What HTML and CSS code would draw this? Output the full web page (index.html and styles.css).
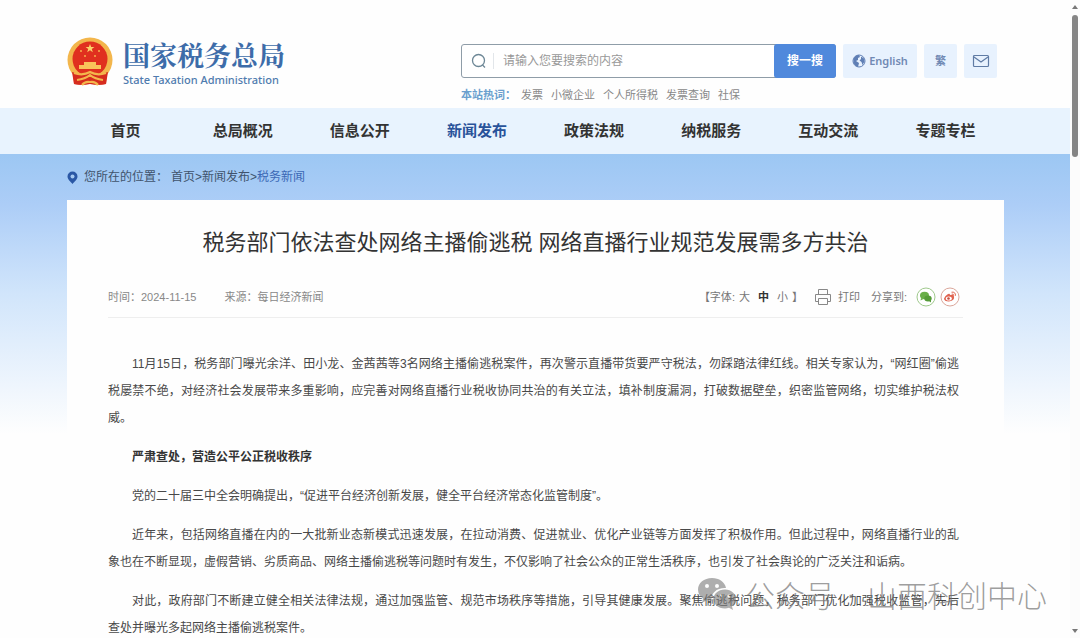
FILE: index.html
```html
<!DOCTYPE html>
<html lang="zh-CN">
<head>
<meta charset="utf-8">
<meta name="viewport" content="width=device-width, initial-scale=1">
<title>国家税务总局</title>
<link rel="stylesheet" href="styles.css">
</head>
<body>
<div class="page">
  <header class="header">
    <div class="container header-row">
      <a class="brand" href="#">
        <svg class="emblem" viewBox="0 0 46 50" aria-hidden="true">
          <path d="M6 30h34l-1 17q-8 2-16 0-8 2-16 0z" fill="#d62c1e"/>
          <circle cx="23" cy="23" r="22.5" fill="#f3b64c"/>
          <circle cx="23" cy="22" r="17.5" fill="#e0301f"/>
          <path d="M23 7l1.200 3h3.200l-2.600 2 1 3.200-2.800-1.900-2.800 1.900 1-3.200-2.600-2h3.200z" fill="#fbd26a"/>
          <g fill="#f7b04c"><circle cx="14" cy="14" r="1"/><circle cx="32" cy="14" r="1"/><circle cx="18" cy="19" r="1"/><circle cx="28" cy="19" r="1"/></g>
          <path d="M17 28v-3h12v3h5v4H12v-4z" fill="#f9c55a"/>
          <path d="M5 35q10 4 18-1 8 5 18 1l-2 12q-8 1-16-1-8 2-16 1z" fill="#d62c1e"/>
          <path d="M7 36q9 3 16-1 7 4 16 1M10 43q8-1 13-5 5 4 13 5M15 48q3-4 8-3 5-1 8 3" fill="none" stroke="#f3b64c" stroke-width="2.200"/>
        </svg>
        <span class="brand-text">
          <span class="brand-cn">国家税务总局</span>
          <span class="brand-en">State Taxation Administration</span>
        </span>
      </a>
      <div class="tools">
        <div class="tools-row">
          <form class="search" role="search">
            <svg class="search-icon" viewBox="0 0 16 16" aria-hidden="true"><circle cx="7.500" cy="7.500" r="6"/><path d="M11.500 12l2.500 2.500"/></svg>
            <input class="search-input" type="text" aria-label="搜索" placeholder="请输入您要搜索的内容">
            <button class="search-button" type="button">搜一搜</button>
          </form>
          <a class="tool tool-wide" href="#">
            <svg class="globe" viewBox="0 0 14 14" aria-hidden="true"><circle cx="7" cy="7" r="6" fill="none" stroke="#5f7fb5"/><path d="M1.500 5Q3 1 7 1l1 2-2 1 0 2-2 1 3 2-1 4Q3 12 1.500 9zM9 2.500l3 2 .5 3-2 3.500-1-3-2-1.500L9 5z" fill="#5f7fb5"/></svg>
            English
          </a>
          <a class="tool" href="#">繁</a>
          <a class="tool" href="#" aria-label="邮箱">
            <svg class="mail" viewBox="0 0 18 14" aria-hidden="true"><rect x="1.500" y="1.500" width="15" height="11" rx="1"/><path d="M2 3l7 5 7-5"/></svg>
          </a>
        </div>
        <div class="hot">
          <strong class="hot-label">本站热词：</strong>
          <a href="#">发票</a><a href="#">小微企业</a><a href="#">个人所得税</a><a href="#">发票查询</a><a href="#">社保</a>
        </div>
      </div>
    </div>
  </header>
  <nav class="nav">
    <div class="container nav-row">
      <a href="#">首页</a><a href="#">总局概况</a><a href="#">信息公开</a><a class="active" href="#">新闻发布</a><a href="#">政策法规</a><a href="#">纳税服务</a><a href="#">互动交流</a><a href="#">专题专栏</a>
    </div>
  </nav>
  <main class="main">
    <div class="container">
      <div class="crumbs">
        <svg class="pin" viewBox="0 0 11 13" aria-hidden="true"><path d="M5.500 0.500a5 5 0 0 1 5 5c0 3-3 5-5 7.500-2-2.500-5-4.500-5-7.500a5 5 0 0 1 5-5z" fill="#2a57a5"/><circle cx="5.500" cy="5.500" r="2" fill="#a5c9f1"/></svg>
        <span class="crumb-label">您所在的位置：</span>
        <span><a href="#">首页</a>&gt;<a href="#">新闻发布</a>&gt;<a class="current" href="#">税务新闻</a></span>
      </div>
      <article class="article">
        <h1 class="title">税务部门依法查处网络主播偷逃税 网络直播行业规范发展需多方共治</h1>
        <div class="meta">
          <span class="date">时间：2024-11-15</span>
          <span>来源：每日经济新闻</span>
          <div class="actions">
            <span class="sizes">【字体<span>:</span><button type="button">大</button><button class="selected" type="button">中</button><button type="button">小</button>】</span>
            <button class="print" type="button">
              <svg class="printer" viewBox="0 0 18 16" aria-hidden="true"><path d="M4.500 5.500v-5h9v5M4.500 12.500h-3v-7h15v7h-3M4.500 9.500h9v6h-9z"/></svg>
              打印
            </button>
            <span class="share-label">分享到:</span>
            <a class="share" href="#" aria-label="微信"><svg viewBox="0 0 20 20" aria-hidden="true"><circle cx="10" cy="10" r="9" fill="#fff" stroke="#9fc98c"/><ellipse cx="8.500" cy="8.500" rx="4.500" ry="3.700" fill="#69ae48"/><path d="M5 11l-.5 2.500 3-1.500z" fill="#69ae48"/><ellipse cx="12" cy="11.500" rx="3.700" ry="3" fill="#559b38"/><path d="M13 14l2 1.500v-3z" fill="#559b38"/></svg></a>
            <a class="share" href="#" aria-label="微博"><svg viewBox="0 0 20 20" aria-hidden="true"><circle cx="10" cy="10" r="9" fill="#fff" stroke="#dba79b"/><path d="M8 7q2-1 2 1 4-1 4 1.500 1 4-5 5-5 0-5-3 1-3 4-4.500z" fill="#e16450"/><ellipse cx="8.800" cy="11.500" rx="3" ry="2" fill="#fff"/><circle cx="8.500" cy="11.500" r="1.300" fill="#c94b3b"/><path d="M11.500 5.200q4-.7 4 3.500M11.800 7q2-.2 2 1.700" fill="none" stroke="#e16450"/></svg></a>
          </div>
        </div>
        <div class="content">
          <p>11月15日，税务部门曝光余洋、田小龙、金茜茜等3名网络主播偷逃税案件，再次警示直播带货要严守税法，勿踩踏法律红线。相关专家认为，“网红圈”偷逃税屡禁不绝，对经济社会发展带来多重影响，应完善对网络直播行业税收协同共治的有关立法，填补制度漏洞，打破数据壁垒，织密监管网络，切实维护税法权威。</p>
          <p><strong>严肃查处，营造公平公正税收秩序</strong></p>
          <p>党的二十届三中全会明确提出，“促进平台经济创新发展，健全平台经济常态化监管制度”。</p>
          <p>近年来，包括网络直播在内的一大批新业态新模式迅速发展，在拉动消费、促进就业、优化产业链等方面发挥了积极作用。但此过程中，网络直播行业的乱象也在不断显现，虚假营销、劣质商品、网络主播偷逃税等问题时有发生，不仅影响了社会公众的正常生活秩序，也引发了社会舆论的广泛关注和诟病。</p>
          <p>对此，政府部门不断建立健全相关法律法规，通过加强监管、规范市场秩序等措施，引导其健康发展。聚焦偷逃税问题，税务部门优化加强税收监管，先后查处并曝光多起网络主播偷逃税案件。</p>
        </div>
      </article>
    </div>
  </main>
</div>
<div class="scrollbar" aria-hidden="true"><span class="arrow-up"></span><span class="thumb"></span><span class="arrow-down"></span></div>
<div class="watermark">
  <svg class="wechat" viewBox="0 0 40 34" aria-hidden="true"><path fill-rule="evenodd" d="M15 1C7 1 1 6 1 12.500c0 4 2 7 5 9L5 26l5-3q2 .7 4.500 1C13.500 16 20 10.500 29 11 28 5 22 1 15 1zM10 7a2 2 0 1 1 0 4 2 2 0 0 1 0-4zM20 7a2 2 0 1 1 0 4 2 2 0 0 1 0-4z"/><path fill-rule="evenodd" d="M28 12.500c-7 0-11.500 4.500-11.500 9.500S21 31.500 28 31.500q2 0 4-.7l4 2.200-1-3.500c2.500-2 4-4.500 4-7.500 0-5-4.500-9.500-11-9.500zM24 17.500a1.500 1.500 0 1 1 0 3 1.500 1.500 0 0 1 0-3zM32 17.500a1.500 1.500 0 1 1 0 3 1.500 1.500 0 0 1 0-3z"/></svg>
  <span>公众号</span><span class="dot">·</span><span>山西科创中心</span>
</div>
</body>
</html>
```
FILE: styles.css
```css
* { box-sizing: border-box; }

body {
  margin: 0;
  height: 100vh;
  display: grid;
  grid-template-columns: minmax(0, 1fr) 10px;
  overflow: hidden;
  position: relative;
  background: #fefefe;
  color: #484848;
  font: 12px/16px "Liberation Sans", "Noto Sans CJK SC", sans-serif;
}

a { color: inherit; text-decoration: none; }
button { padding: 0; border: 0; background: none; color: inherit; font: inherit; }
svg { display: block; flex: none; }

.page { min-width: 0; overflow: hidden; }
.container { margin: 0 66px 0 67px; }

.header { padding-top: 36px; }
.header-row { display: flex; justify-content: space-between; align-items: flex-start; }

.brand { display: flex; align-items: center; gap: 10px; }
.emblem { width: 46px; height: 50px; }
.brand-text { display: flex; flex-direction: column; padding-top: 2px; }
.brand-cn {
  font-family: "Noto Serif CJK SC", "Noto Sans CJK SC", serif;
  font-size: 27px;
  line-height: 34px;
  font-weight: 700;
  color: #3d6ca9;
}
.brand-en { font: 500 11px/16px "Noto Sans", sans-serif; color: #4f7bae; }

.tools { margin-right: 7px; padding-top: 8px; }
.tools-row { display: flex; gap: 7px; }
.search {
  display: flex;
  align-items: center;
  width: 375px;
  height: 34px;
  border: 1px solid #8f9da8;
  border-radius: 3px;
  background: #fff;
}
.search-icon { width: 16px; height: 16px; margin: 0 6px 0 9px; fill: none; stroke: #6d8796; stroke-width: 1.3; }
.search-input {
  flex: 1;
  min-width: 0;
  height: 16px;
  padding: 0 9px;
  border: 0;
  border-left: 1px solid #e2e6ea;
  outline: 0;
  background: none;
  font: inherit;
}
.search-input::placeholder { color: #999; opacity: 1; }
.search-button {
  width: 62px;
  height: 34px;
  margin-right: -1px;
  border-radius: 3px;
  background: #5089dc;
  color: #fff;
  font-weight: 700;
}
.tool {
  display: flex;
  align-items: center;
  justify-content: center;
  gap: 3px;
  width: 33px;
  height: 34px;
  border-radius: 2px;
  background: #e8f2fe;
  color: #7089b4;
  font: 600 11px/16px "Noto Sans", "Noto Sans CJK SC", sans-serif;
}
.tool-wide { width: 74px; }
.globe { width: 14px; height: 14px; }
.mail { width: 18px; height: 14px; fill: none; stroke: #607ca5; stroke-width: 1.2; }

.hot { display: flex; gap: 8px; margin-top: 9px; padding-bottom: 5px; font-size: 11px; line-height: 16px; color: #888; }
.hot-label { margin-right: -3px; color: #6a9fce; }

.nav { background: #e8f3fe; }
.nav-row { display: grid; grid-template-columns: repeat(8, 1fr); }
.nav-row a { padding: 11px 0 12px; text-align: center; font-size: 15px; line-height: 23px; font-weight: 700; color: #333; }
.nav-row .active { color: #28529a; }

.main { background: linear-gradient(#9cc7f3 0, #accdf7 50px, #d1e5fb 140px, #fefefe 280px); }
.crumbs { display: flex; align-items: center; padding: 15px 0; color: #40536c; }
.pin { width: 11px; height: 13px; margin-right: 6px; }
.crumb-label { margin-right: 3px; }
.current { color: #3c68b5; }

.article { padding: 26px 41px 20px; background: #fefefe; }
.title { margin: 0; text-align: center; font-size: 22px; line-height: 34px; font-weight: 400; color: #333; }
.meta {
  display: flex;
  align-items: center;
  margin-top: 27px;
  padding-bottom: 10px;
  border-bottom: 1px solid #eee;
  font-size: 11px;
  line-height: 16px;
  color: #888;
}
.date { margin-right: 28px; }
.actions { display: flex; align-items: center; margin-left: auto; margin-right: 3px; color: #777; }
.sizes { display: flex; }
.sizes button { margin: 0 4px; }
.sizes .selected { font-weight: 700; color: #333; }
.print { display: flex; align-items: center; gap: 6px; margin: 0 11px; }
.printer { width: 18px; height: 16px; fill: none; stroke: #888; }
.share-label { margin-right: 5px; }
.share { margin-left: 4px; }
.share svg { width: 20px; height: 20px; }

.content { margin-top: 33px; padding-right: 4px; line-height: 27px; text-align: justify; }
.content p { margin: 0 0 12px; text-indent: 24px; }
.content strong { color: #333; }

.scrollbar { display: flex; flex-direction: column; align-items: center; padding: 5px 0; background: #fcfcfc; }
.thumb { width: 6px; height: 142px; margin-top: 6px; border-radius: 3px; background: #858585; }
.arrow-up { border: 3px solid transparent; border-top: 0; border-bottom: 4px solid #777; }
.arrow-down { margin-top: auto; border: 3px solid transparent; border-bottom: 0; border-top: 4px solid #777; }

.watermark {
  position: absolute;
  right: 33px;
  bottom: 22px;
  display: flex;
  align-items: center;
  gap: 8px;
  color: rgba(115, 115, 115, 0.7);
  font: 300 30px/44px "Noto Sans CJK SC", sans-serif;
}
.dot { width: 16px; text-align: center; font-family: "Liberation Sans", sans-serif; }
.wechat { width: 40px; height: 34px; fill: rgba(120, 120, 120, 0.6); }
```
